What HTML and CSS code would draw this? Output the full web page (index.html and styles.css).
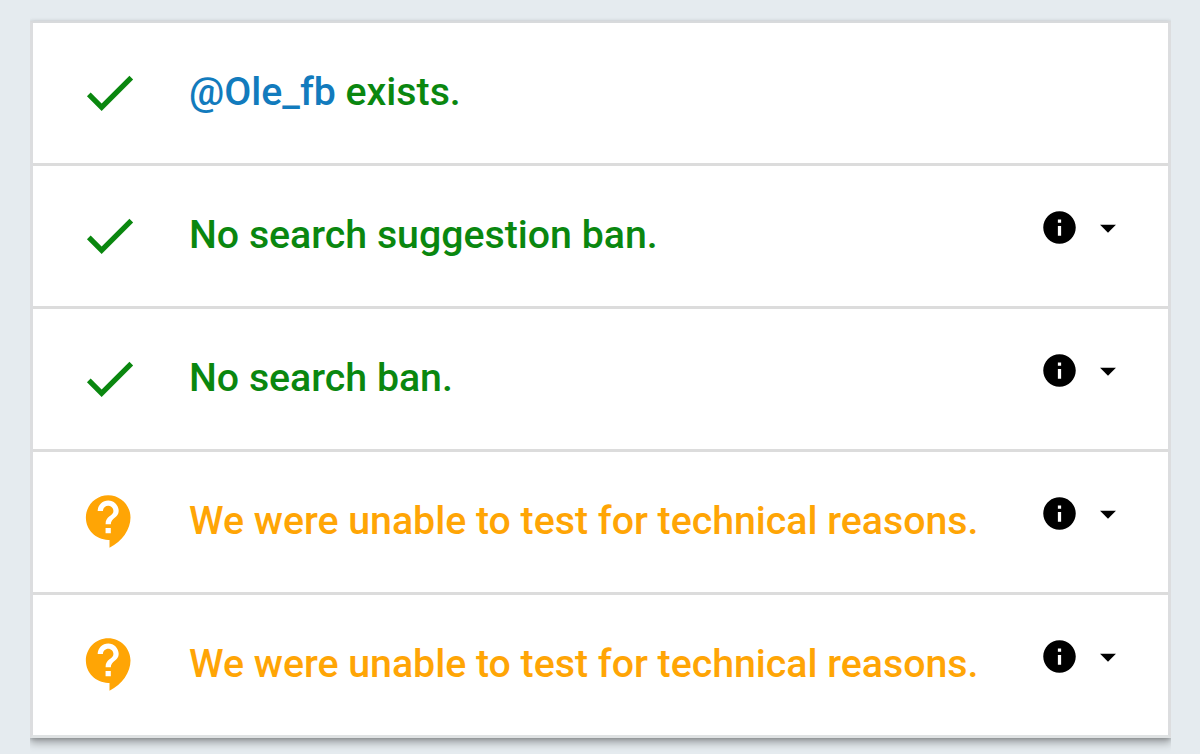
FILE: index.html
```html
<!DOCTYPE html>
<html lang="en">
<head>
<meta charset="utf-8">
<title>Account test results</title>
<link rel="stylesheet" href="styles.css">
</head>
<body>
<svg class="symbols" aria-hidden="true">
  <symbol id="check" viewBox="0 0 24 24"><path d="M9 16.17L4.83 12l-1.42 1.41L9 19 21 7l-1.41-1.41z"/></symbol>
  <symbol id="question" viewBox="0 0 24 24"><path d="M11.5 2C6.81 2 3 5.81 3 10.5S6.81 19 11.5 19h.5v3c4.86-2.34 8-7 8-11.5C20 5.81 16.19 2 11.5 2zm1 14.5h-2v-2h2v2zm0-3.5h-2c0-3.25 3-3 3-5 0-1.1-.9-2-2-2s-2 .9-2 2h-2c0-2.21 1.79-4 4-4s4 1.79 4 4c0 2.5-3 2.75-3 5z"/></symbol>
  <symbol id="info" viewBox="0 0 24 24"><path d="M12 2C6.48 2 2 6.48 2 12s4.48 10 10 10 10-4.48 10-10S17.52 2 12 2zm1 15h-2v-6h2v6zm0-8h-2V7h2v2z"/></symbol>
  <symbol id="caret" viewBox="0 0 24 24"><path d="M7 10l5 5 5-5z"/></symbol>
</svg>
<ul class="results">
  <li class="row pass"><svg class="status"><use href="#check"/></svg><span class="label"><a class="handle">@Ole_fb</a> exists.</span></li>
  <li class="row pass"><svg class="status"><use href="#check"/></svg><span class="label">No search suggestion ban.</span><span class="more"><svg class="info"><use href="#info"/></svg><svg class="caret"><use href="#caret"/></svg></span></li>
  <li class="row pass"><svg class="status"><use href="#check"/></svg><span class="label">No search ban.</span><span class="more"><svg class="info"><use href="#info"/></svg><svg class="caret"><use href="#caret"/></svg></span></li>
  <li class="row unknown"><svg class="status"><use href="#question"/></svg><span class="label">We were unable to test for technical reasons.</span><span class="more"><svg class="info"><use href="#info"/></svg><svg class="caret"><use href="#caret"/></svg></span></li>
  <li class="row unknown"><svg class="status"><use href="#question"/></svg><span class="label">We were unable to test for technical reasons.</span><span class="more"><svg class="info"><use href="#info"/></svg><svg class="caret"><use href="#caret"/></svg></span></li>
</ul>
</body>
</html>
```
FILE: styles.css
```css
* { box-sizing: border-box; }
body { margin: 0; height: 754px; overflow: hidden; padding: 21px 29px 0 30px; background: #e5ebef; font-family: Roboto, sans-serif; }
.symbols { display: none; }
.results { list-style: none; margin: 0; padding: 0; height: 717px; background: #fff; border: 3px solid #dcdddf; border-top: 2px solid #d8dadc; border-bottom-color: #dfe2e3; box-shadow: 0 5px 8px rgba(0,0,0,.3), 0 1px 4px rgba(0,0,0,.2); clip-path: inset(-8px 0 -16px 0); }
.row { display: flex; align-items: center; height: 143px; padding: 0 41px 0 44.8px; border-bottom: 3px solid #dcdcdc; }
.row:last-child { border-bottom-color: transparent; }
.pass { color: #0a870f; }
.unknown { color: #ffa505; }
.status { flex: none; width: 63px; height: 63px; margin: -1.6px 48.2px 0 0; fill: currentColor; }
.label { flex: 1; font-size: 39.27px; font-weight: 500; line-height: 48px; white-space: nowrap; padding-bottom: 2px; }
.handle { color: #127bbd; }
.more { display: flex; align-items: center; fill: #000; padding-bottom: 17px; }
.info { width: 39px; height: 39px; margin-right: 10px; }
.caret { width: 38px; height: 38px; }
```
